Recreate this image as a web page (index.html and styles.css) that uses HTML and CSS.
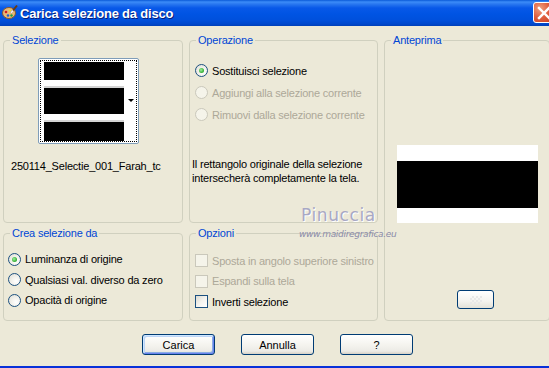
FILE: index.html
```html
<!DOCTYPE html>
<html lang="it">
<head>
<meta charset="utf-8">
<title>Carica selezione da disco</title>
<link rel="stylesheet" href="styles.css">
</head>
<body>
<div class="window">
  <div class="titlebar">
    <svg class="app-icon" width="16" height="16" viewBox="0 0 16 16">
      <ellipse cx="7" cy="9" rx="6.5" ry="5.5" fill="#E8B878" stroke="#8A5A2A" stroke-width="1"/>
      <circle cx="4" cy="8" r="1.3" fill="#D02020"/>
      <circle cx="6" cy="11.5" r="1.3" fill="#2060D0"/>
      <circle cx="9.5" cy="11.5" r="1.2" fill="#20A040"/>
      <circle cx="8" cy="6.5" r="1.1" fill="#F0E020"/>
      <path d="M9 9 L15 1.5" stroke="#6A3A10" stroke-width="2"/>
      <path d="M9 9 L11 6.5" stroke="#F0F0F0" stroke-width="2"/>
    </svg>
    <span class="title">Carica selezione da disco</span>
    <div class="close-btn">
      <svg width="14" height="14" viewBox="0 0 14 14"><path d="M2 2 L12 12 M12 2 L2 12" stroke="#fff" stroke-width="2.4" stroke-linecap="square"/></svg>
    </div>
  </div>

  <div class="content">
    <div class="groups">
      <div class="group g-sel">
        <span class="legend">Selezione</span>
        <div class="thumb">
          <div class="thumb-inner">
            <div class="bars">
              <div class="bar b1"></div>
              <div class="bar b2"></div>
              <div class="bar b3"></div>
            </div>
            <div class="drop-arrow"></div>
          </div>
        </div>
        <div class="filename">250114_Selectie_001_Farah_tc</div>
      </div>

      <div class="group g-op">
        <span class="legend">Operazione</span>
        <div class="options op-list">
          <label class="opt"><span class="radio checked"></span>Sostituisci selezione</label>
          <label class="opt disabled"><span class="radio"></span>Aggiungi alla selezione corrente</label>
          <label class="opt disabled"><span class="radio"></span>Rimuovi dalla selezione corrente</label>
        </div>
        <p class="desc">Il rettangolo originale della selezione<br>intersecherà completamente la tela.</p>
      </div>

      <div class="group g-prev">
        <span class="legend">Anteprima</span>
        <div class="preview"><div class="preview-band"></div></div>
        <div class="mini-btn"><span class="checker"></span></div>
      </div>

      <div class="group g-crea">
        <span class="legend">Crea selezione da</span>
        <div class="options crea-list">
          <label class="opt"><span class="radio checked"></span>Luminanza di origine</label>
          <label class="opt"><span class="radio"></span>Qualsiasi val. diverso da zero</label>
          <label class="opt"><span class="radio"></span>Opacità di origine</label>
        </div>
      </div>

      <div class="group g-opz">
        <span class="legend">Opzioni</span>
        <div class="options opz-list">
          <label class="opt disabled"><span class="check"></span>Sposta in angolo superiore sinistro</label>
          <label class="opt disabled"><span class="check"></span>Espandi sulla tela</label>
          <label class="opt"><span class="check"></span>Inverti selezione</label>
        </div>
      </div>

      <div class="watermark">
        <span class="wm-name">Pinuccia</span>
        <span class="wm-url">www.maidiregrafica.eu</span>
      </div>
    </div>

    <div class="buttons">
      <button class="btn default">Carica</button>
      <button class="btn">Annulla</button>
      <button class="btn">?</button>
    </div>
  </div>
  <div class="bottom-edge"></div>
</div>
</body>
</html>
```

FILE: styles.css
```css
* { box-sizing: border-box; }
html, body { margin: 0; padding: 0; }
body {
  width: 549px;
  height: 368px;
  overflow: hidden;
  background: #ECE9D8;
  font-family: "Liberation Sans", Arial, sans-serif;
  font-size: 11px;
  letter-spacing: -0.2px;
  color: #000;
}
.window {
  width: 549px;
  height: 368px;
  display: flex;
  flex-direction: column;
  background: #ECE9D8;
}
.titlebar {
  height: 26px;
  flex: none;
  display: flex;
  align-items: center;
  padding-left: 2px;
  background: linear-gradient(to bottom, #0A5AD8 0px, #3C8CF8 2px, #2A78F0 4px, #0858E8 8px, #0054E3 14px, #0050DC 20px, #0048CC 24px, #0040B8 26px);
  position: relative;
}
.app-icon { flex: none; margin-top: -2px; }
.title {
  margin-left: 2px;
  color: #fff;
  font-weight: bold;
  font-size: 13px;
  letter-spacing: -0.2px;
  text-shadow: 1px 1px 0 #0A1E78;
}
.close-btn {
  position: absolute;
  left: 533px;
  top: 2px;
  width: 22px;
  height: 21px;
  border: 1px solid #fff;
  border-radius: 3px;
  background: radial-gradient(circle at 30% 30%, #F0A080 0%, #E06040 45%, #C83C1C 100%);
  display: flex;
  align-items: center;
  justify-content: center;
}
.content {
  flex: 1;
  display: flex;
  flex-direction: column;
  padding: 14px 0 0 3px;
}
.groups {
  position: relative;
  display: grid;
  grid-template-columns: 180px 189px 166px;
  grid-template-rows: 183px 88px;
  column-gap: 6px;
  row-gap: 10px;
}
.group {
  position: relative;
  border: 1px solid #D0D0BF;
  border-radius: 4px;
}
.legend {
  position: absolute;
  top: -8px;
  left: 6px;
  padding: 0 2px;
  background: #ECE9D8;
  color: #0046D5;
  line-height: 14px;
}
.g-sel { grid-column: 1; grid-row: 1; }
.g-op { grid-column: 2; grid-row: 1; }
.g-prev { grid-column: 3; grid-row: 1 / 3; }
.g-crea { grid-column: 1; grid-row: 2; }
.g-opz { grid-column: 2; grid-row: 2; }

/* Selezione thumbnail */
.thumb {
  margin: 17px 0 0 34px;
  width: 101px;
  height: 86px;
  border: 1px solid #7F9DB9;
  border-radius: 2px;
  background: #fff;
  padding: 1px;
}
.thumb-inner {
  position: relative;
  width: 100%;
  height: 100%;
  border: 1px dotted #000;
  padding: 1px 12px 0 3px;
}
.bars {
  display: flex;
  flex-direction: column;
  height: 100%;
}
.bar { background: #000; }
.b1 { height: 18px; }
.b2 { height: 27px; margin-top: 8px; box-shadow: 0 -2px 0 #D4D4D4; }
.b3 { height: 19px; margin-top: 8px; box-shadow: 0 -2px 0 #D4D4D4; }
.drop-arrow {
  position: absolute;
  right: 2px;
  top: 38px;
  width: 0;
  height: 0;
  border-left: 3px solid transparent;
  border-right: 3px solid transparent;
  border-top: 3px solid #000;
}
.filename {
  margin: 15px 0 0 7px;
  line-height: 14px;
  white-space: nowrap;
}

/* options */
.options {
  display: flex;
  flex-direction: column;
}
.opt {
  display: flex;
  align-items: center;
  gap: 4px;
  white-space: nowrap;
  line-height: 14px;
}
.opt.disabled { color: #ACA899; }
.radio {
  flex: none;
  width: 13px;
  height: 13px;
  border-radius: 50%;
  border: 1px solid #1C5180;
  background: radial-gradient(circle at 65% 65%, #FFFFFF 0%, #F4F3EE 40%, #DCDBD2 100%);
  position: relative;
}
.opt.disabled .radio {
  border-color: #CAC8BB;
  background: #F5F4EA;
}
.radio.checked::after {
  content: "";
  position: absolute;
  left: 3px;
  top: 3px;
  width: 5px;
  height: 5px;
  border-radius: 50%;
  background: radial-gradient(circle at 40% 40%, #A0F0A0 0%, #3CB43C 60%, #1C8C1C 100%);
}
.check {
  flex: none;
  width: 13px;
  height: 13px;
  border: 1px solid #1C5180;
  background: linear-gradient(135deg, #DCDBD2 0%, #F4F3EE 50%, #FFFFFF 100%);
}
.opt.disabled .check {
  border-color: #CAC8BB;
  background: #F5F4EA;
}
.op-list { margin: 19px 0 0 5px; gap: 0; }
.op-list .opt { height: 21px; }
.op-list .opt:nth-child(2) { height: 23px; }
.desc {
  margin: 32px 0 0 2px;
  line-height: 14px;
}
.crea-list { margin: 15px 0 0 4px; }
.crea-list .opt { height: 20px; }
.crea-list .opt:nth-child(2) { height: 21px; }
.opz-list { margin: 16px 0 0 5px; }
.opz-list .opt { height: 21px; }
.opz-list .opt:nth-child(2) { height: 20px; }

/* preview */
.preview {
  margin: 104px 0 0 12px;
  width: 141px;
  height: 78px;
  background: #fff;
  padding-top: 16px;
}
.preview-band {
  height: 47px;
  background: #000;
}
.mini-btn {
  margin: 67px 0 0 72px;
  width: 37px;
  height: 19px;
  border: 1px solid #003C74;
  border-radius: 3px;
  background: linear-gradient(to bottom, #FFFFFF 0%, #F4F3EE 60%, #E3E1D8 100%);
  display: flex;
  align-items: center;
  justify-content: center;
}
.checker {
  width: 12px;
  height: 8px;
  background:
    linear-gradient(45deg, #E8E8E8 25%, transparent 25%, transparent 75%, #E8E8E8 75%),
    linear-gradient(45deg, #E8E8E8 25%, transparent 25%, transparent 75%, #E8E8E8 75%);
  background-size: 4px 4px;
  background-position: 0 0, 2px 2px;
}

/* watermark */
.watermark {
  position: absolute;
  left: 293px;
  top: 165px;
  display: flex;
  flex-direction: column;
  align-items: flex-start;
  pointer-events: none;
}
.wm-name {
  margin-left: 5px;
  font-family: "DejaVu Sans", sans-serif;
  font-size: 17px;
  line-height: 20px;
  letter-spacing: 0.6px;
  color: #A8A8C4;
  text-shadow: 1px 1px 0 #fff;
}
.wm-url {
  margin-top: 3px;
  margin-left: 3px;
  font-family: "DejaVu Sans", sans-serif;
  font-size: 9px;
  font-style: italic;
  letter-spacing: -0.3px;
  line-height: 12px;
  color: #8A8AA8;
}

/* buttons */
.buttons {
  display: flex;
  gap: 26px;
  padding-left: 139px;
  margin-top: 13px;
}
.btn {
  width: 73px;
  height: 21px;
  padding: 0;
  font-family: "Liberation Sans", Arial, sans-serif;
  font-size: 11px;
  color: #000;
  border: 1px solid #003C74;
  border-radius: 3px;
  background: linear-gradient(to bottom, #FFFFFF 0%, #F5F4EF 50%, #ECEBE6 85%, #D6D0C5 100%);
}
.btn.default {
  box-shadow: inset 1px 1px 0 #CEE7FF, inset -1px -1px 0 #6982EE, inset 2px 2px 0 #BCD4F6, inset -2px -2px 0 #89ADE4;
}
.bottom-edge {
  height: 2px;
  flex: none;
  background: #0831D9;
}
```
